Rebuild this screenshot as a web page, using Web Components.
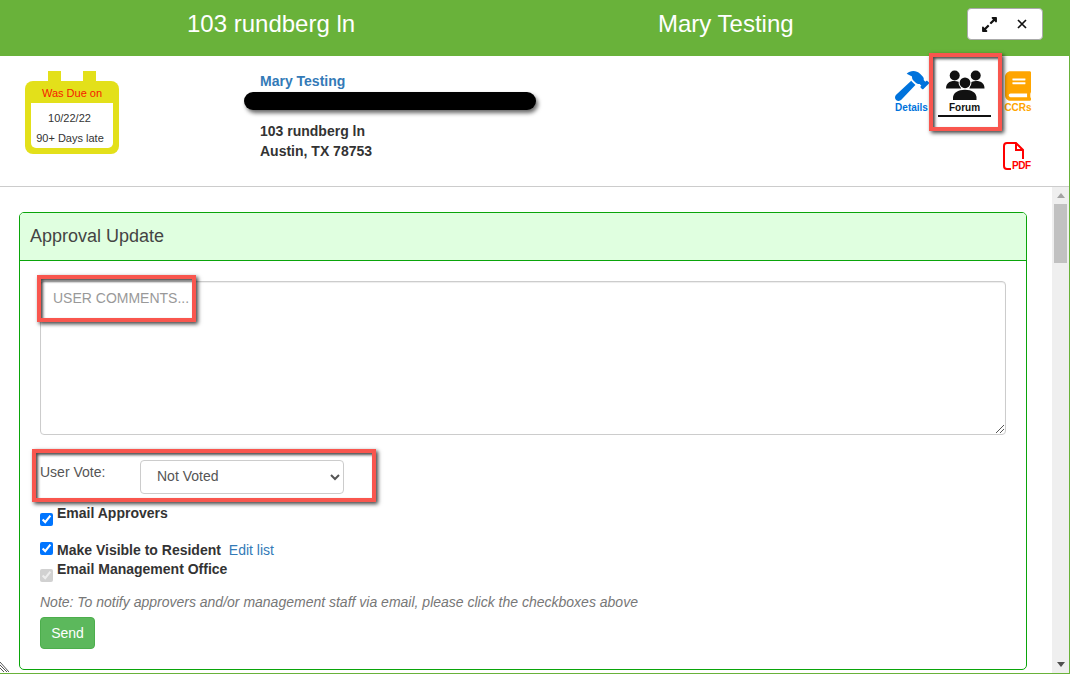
<!DOCTYPE html>
<html lang="en">
<head>
<meta charset="utf-8">
<title>Approval Update</title>
<style>
  html, body { margin: 0; padding: 0; background: #fff; overflow: hidden; }
  body { font-family: "Liberation Sans", Arial, sans-serif; font-size: 14px; color: #333; }
</style>
</head>
<body>
<request-window>
  <title-bar slot="top" address="103 rundberg ln" owner="Mary Testing"></title-bar>
  <request-summary slot="top"></request-summary>
  <approval-card></approval-card>
</request-window>

<script>
const ICONS = {
  hammer: '<svg viewBox="0 0 576 512" width="34" height="30" preserveAspectRatio="none" fill="#0073dc"><path d="M571.31 193.94l-22.63-22.63c-6.25-6.25-16.38-6.25-22.63 0l-11.31 11.31-28.9-28.9c5.63-21.31.36-44.9-16.35-61.61l-45.25-45.25c-62.48-62.48-163.79-62.48-226.28 0l90.51 45.25v18.75c0 16.97 6.74 33.25 18.75 45.25l49.14 49.14c16.71 16.71 40.3 21.98 61.61 16.35l28.9 28.9-11.31 11.31c-6.25 6.25-6.25 16.38 0 22.63l22.63 22.63c6.25 6.25 16.38 6.25 22.63 0l90.51-90.51c6.23-6.24 6.23-16.37-.02-22.62zm-286.72-15.2c-3.7-3.7-6.84-7.79-9.85-11.95L19.64 404.96c-25.57 23.88-26.26 64.19-1.53 88.93s65.05 24.05 88.93-1.53l238.13-255.07c-3.96-2.91-7.9-5.87-11.44-9.41l-49.14-49.14z"/></svg>',
  users: `<svg viewBox="0 0 40 31" width="40" height="31" fill="#111">
    <circle cx="9.7" cy="5.5" r="5"/><circle cx="30.7" cy="5.5" r="5"/>
    <path d="M1 18.5C1 13.5 4 11 9.5 11c3 0 5.5 1 6.5 3v4.5z"/>
    <path d="M39.5 18.5c0-5-3-7.5-8.5-7.5-3 0-5.5 1-6.5 3v4.5z"/>
    <circle cx="20" cy="12.8" r="6.4" fill="#fff"/><circle cx="20" cy="12.8" r="5.4"/>
    <path d="M8 30v-2.5C8 23 13 19.7 20 19.7s11.500 3.300 11.500 7.800V30z"/>
  </svg>`,
  book: '<svg viewBox="0 0 448 512" width="26" height="30" fill="#ffa500"><path d="M448 360V24c0-13.3-10.7-24-24-24H96C43 0 0 43 0 96v320c0 53 43 96 96 96h328c13.3 0 24-10.7 24-24v-16c0-7.5-3.5-14.3-8.9-18.7-4.2-15.4-4.2-59.3 0-74.7 5.4-4.3 8.9-11.1 8.9-18.6zM128 134c0-3.3 2.7-6 6-6h212c3.3 0 6 2.7 6 6v20c0 3.3-2.7 6-6 6H134c-3.3 0-6-2.7-6-6v-20zm0 64c0-3.3 2.7-6 6-6h212c3.3 0 6 2.7 6 6v20c0 3.3-2.7 6-6 6H134c-3.3 0-6-2.7-6-6v-20zm253.4 250H96c-17.7 0-32-14.3-32-32 0-17.6 14.4-32 32-32h285.4c-1.9 17.1-1.9 46.9 0 64z"/></svg>',
  expand: '<svg viewBox="0 0 448 512" width="15" height="17" fill="#111"><path d="M212.686 315.314L120 408l32.922 31.029c15.12 15.12 4.412 40.971-16.97 40.971h-112C10.697 480 0 469.255 0 456V344c0-21.382 25.803-32.09 40.922-16.971L72 360l92.686-92.686c6.248-6.248 16.379-6.248 22.627 0l25.373 25.373c6.249 6.248 6.249 16.378 0 22.627zm22.628-118.628L328 104l-32.922-31.029C279.958 57.851 290.666 32 312.048 32h112C437.303 32 448 42.745 448 56v112c0 21.382-25.803 32.09-40.922 16.971L376 152l-92.686 92.686c-6.248 6.248-16.379 6.248-22.627 0l-25.373-25.373c-6.249-6.248-6.249-16.378 0-22.627z"/></svg>',
  close: '<svg viewBox="0 0 10 10" width="10" height="10" stroke="#111" stroke-width="1.7" fill="none"><path d="M1 1l8 8M9 1l-8 8"/></svg>'
};

class RequestWindow extends HTMLElement {
  constructor() {
    super();
    this.attachShadow({ mode: 'open' });
    this.shadowRoot.innerHTML = `
      <style>
        :host {
          display: flex;
          flex-direction: column;
          position: relative;
          width: 1069px;
          height: 673px;
          box-sizing: content-box;
          border-right: 1px solid #69b23a;
          border-bottom: 1px solid #69b23a;
          overflow: hidden;
          background: #fff;
        }
        .main { flex: 1; min-height: 0; display: flex; }
        .scroller { flex: 1; min-width: 0; overflow: hidden; padding: 25px 25px 0 19px; }
        .grip { position: absolute; left: 0; bottom: 0; }
      </style>
      <slot name="top"></slot>
      <div class="main">
        <div class="scroller"><slot></slot></div>
        <fake-scrollbar></fake-scrollbar>
      </div>
      <svg class="grip" width="9" height="11" viewBox="0 0 9 11" stroke="#555" stroke-width="1" fill="none">
        <path d="M0 3l7 7M0 6l4 4M0 0l9 10"/>
      </svg>
      <note-box style="left:929px;top:53px;width:73px;height:78px"></note-box>
      <note-box style="left:37px;top:275px;width:159px;height:47px"></note-box>
      <note-box style="left:32px;top:449px;width:344px;height:53px"></note-box>
    `;
  }
}

class NoteBox extends HTMLElement {
  constructor() {
    super();
    this.attachShadow({ mode: 'open' });
    this.shadowRoot.innerHTML = `
      <style>
        :host {
          position: absolute;
          box-sizing: border-box;
          border: 4px solid #f9564e;
          box-shadow: 2px 2px 4px rgba(0,0,0,.75), inset 2px 2px 3px rgba(0,0,0,.7);
          pointer-events: none;
        }
      </style>
    `;
  }
}

class TitleBar extends HTMLElement {
  constructor() {
    super();
    this.attachShadow({ mode: 'open' });
    this.shadowRoot.innerHTML = `
      <style>
        :host {
          display: flex;
          align-items: center;
          height: 56px;
          box-sizing: border-box;
          padding-bottom: 8px;
          flex: none;
          background: #69b23a;
          color: #fff;
          font-size: 24px;
        }
        .address { margin-left: 187px; width: 471px; }
        .owner { width: 309px; }
        .controls {
          width: 76px;
          height: 32px;
          box-sizing: border-box;
          background: #fff;
          border: 1px solid #aaa;
          border-radius: 4px;
          display: flex;
          align-items: center;
          gap: 20px;
          padding-left: 14px;
        }
        .controls svg { display: block; }
      </style>
      <div class="address"></div>
      <div class="owner"></div>
      <div class="controls">${ICONS.expand}${ICONS.close}</div>
    `;
    this.shadowRoot.querySelector('.address').textContent = this.getAttribute('address');
    this.shadowRoot.querySelector('.owner').textContent = this.getAttribute('owner');
  }
}

class DueCalendar extends HTMLElement {
  constructor() {
    super();
    this.attachShadow({ mode: 'open' });
    this.shadowRoot.innerHTML = `
      <style>
        :host { display: block; width: 94px; flex: none; font-size: 11px; color: #333; }
        .tabs { display: flex; gap: 22px; padding-left: 23px; height: 10px; }
        .tabs i { width: 13px; background: #e3e01a; }
        .body { background: #e3e01a; border-radius: 8px; padding: 0 6px 6px; height: 73px; box-sizing: border-box; display: flex; flex-direction: column; }
        .head { height: 22px; line-height: 24px; text-align: center; color: #f51a00; }
        .inner { flex: 1; background: #fff; border-radius: 0 0 5px 5px; text-align: center; }
        .date { line-height: 14px; padding-top: 8px; padding-right: 5px; }
        .late { line-height: 14px; padding-top: 6px; padding-right: 4px; }
      </style>
      <div class="tabs"><i></i><i></i></div>
      <div class="body">
        <div class="head">Was Due on</div>
        <div class="inner">
          <div class="date">10/22/22</div>
          <div class="late">90+ Days late</div>
        </div>
      </div>
    `;
  }
}

class ResidentInfo extends HTMLElement {
  constructor() {
    super();
    this.attachShadow({ mode: 'open' });
    this.shadowRoot.innerHTML = `
      <style>
        :host { display: block; width: 300px; font-weight: bold; font-size: 14px; color: #333; }
        .name { color: #337ab7; line-height: 16px; padding-left: 16px; }
        .redact { width: 292px; height: 18px; border-radius: 9px; background: #000; margin-top: 3px; box-shadow: 2px 3px 4px rgba(0,0,0,.6); }
        .addr { padding: 11px 0 0 16px; line-height: 20px; }
      </style>
      <div class="name">Mary Testing</div>
      <div class="redact"></div>
      <div class="addr">103 rundberg ln<br>Austin, TX 78753</div>
    `;
  }
}

class NavIcon extends HTMLElement {
  constructor() {
    super();
    this.attachShadow({ mode: 'open' });
    const color = this.getAttribute('color');
    this.shadowRoot.innerHTML = `
      <style>
        :host { display: flex; flex-direction: column; align-items: center; font-size: 10px; font-weight: bold; color: ${color}; }
        .art { height: 31px; display: flex; align-items: flex-end; justify-content: center; }
        .art svg { display: block; }
        .label { line-height: 12px; margin-top: 1px; padding-bottom: 1px; width: 100%; text-align: center; }
        :host([active]) .label { border-bottom: 2px solid #111; }
      </style>
      <div class="art">${ICONS[this.getAttribute('icon')]}</div>
      <div class="label">${this.getAttribute('label')}</div>
    `;
  }
}

class PdfIcon extends HTMLElement {
  constructor() {
    super();
    this.attachShadow({ mode: 'open' });
    this.shadowRoot.innerHTML = `
      <style>
        :host { display: block; width: 28px; height: 28px; }
        svg { display: block; overflow: visible; }
        text { font: bold 10px "Liberation Sans", Arial, sans-serif; fill: #f00; }
      </style>
      <svg width="28" height="28" viewBox="0 0 28 28" fill="none" stroke="#f00" stroke-width="2">
        <path d="M8 27H4a3 3 0 0 1-3-3V4a3 3 0 0 1 3-3h9l7 7v9"/>
        <path d="M13 1v7h7"/>
        <text x="9" y="27" stroke="none" textLength="19">PDF</text>
      </svg>
    `;
  }
}

class RequestSummary extends HTMLElement {
  constructor() {
    super();
    this.attachShadow({ mode: 'open' });
    this.shadowRoot.innerHTML = `
      <style>
        :host {
          display: flex;
          flex: none;
          height: 130px;
          box-sizing: content-box;
          border-bottom: 1px solid #ccc;
          padding-left: 25px;
        }
        due-calendar { margin-top: 15px; }
        resident-info { margin: 17px 0 0 125px; }
        .nav {
          margin: 14px 36px 0 auto;
          display: grid;
          grid-template-columns: 35px 53px 33px;
          column-gap: 9px;
          align-content: start;
        }
        .nav nav-icon:nth-child(3) { width: 30px; justify-self: end; }
        pdf-icon { grid-column: 3; margin-top: 25px; justify-self: end; margin-right: 2px; }
      </style>
      <due-calendar></due-calendar>
      <resident-info></resident-info>
      <div class="nav">
        <nav-icon icon="hammer" label="Details" color="#0073dc"></nav-icon>
        <nav-icon icon="users" label="Forum" color="#111" active></nav-icon>
        <nav-icon icon="book" label="CCRs" color="#ffa500"></nav-icon>
        <pdf-icon></pdf-icon>
      </div>
    `;
  }
}

class CheckRow extends HTMLElement {
  constructor() {
    super();
    this.attachShadow({ mode: 'open' });
    const disabled = this.hasAttribute('disabled') ? 'disabled' : '';
    this.shadowRoot.innerHTML = `
      <style>
        :host { display: flex; align-items: center; height: 20px; font-size: 14px; font-weight: bold; color: #333; white-space: pre; }
        input { width: 13px; height: 13px; margin: 0 4px 0 0; position: relative; top: -2px; }
      </style>
      <input type="checkbox" checked ${disabled}>
      <slot></slot>
    `;
  }
}

class ApprovalCard extends HTMLElement {
  constructor() {
    super();
    this.attachShadow({ mode: 'open' });
    this.shadowRoot.innerHTML = `
      <style>
        :host {
          display: block;
          width: 1008px;
          height: 458px;
          box-sizing: border-box;
          border: 1px solid #0aa50a;
          border-radius: 5px;
          overflow: hidden;
          font-size: 14px;
          color: #555;
        }
        .head {
          height: 48px;
          box-sizing: border-box;
          background: #e0ffe0;
          border-bottom: 1px solid #0aa50a;
          font-size: 18px;
          line-height: 46px;
          padding-left: 10px;
          color: #444;
        }
        .body { padding: 20px 20px 0; }
        .comments {
          position: relative;
          height: 154px;
          width: 966px;
          box-sizing: border-box;
          border: 1px solid #ccc;
          border-radius: 4px;
          padding: 7px 12px;
          color: #999;
          line-height: 18px;
          box-shadow: inset 0 1px 1px rgba(0,0,0,.075);
        }
        .comments svg { position: absolute; right: 1px; bottom: 1px; }
        .vote { display: flex; align-items: flex-start; margin-top: 25px; height: 34px; }
        .vote label { width: 100px; padding-top: 3px; line-height: 18px; }
        select {
          width: 204px;
          height: 34px;
          box-sizing: border-box;
          background: #fff;
          border: 1px solid #ccc;
          border-radius: 4px;
          padding: 0 12px 2px;
          font: 14px "Liberation Sans", Arial, sans-serif;
          color: #555;
        }
        .checks { margin-top: 17px; }
        check-row + check-row { margin-top: 9px; }
        check-row.tight { margin-top: 7px; }
        a { font-weight: normal; color: #337ab7; margin-left: 4px; text-decoration: none; }
        .note { font-size: 14px; font-style: italic; color: #777; line-height: 16px; margin-top: 7px; }
        button {
          display: block;
          margin-top: 7px;
          width: 55px;
          height: 32px;
          background: #5cb85c;
          border: 1px solid #4cae4c;
          border-radius: 4px;
          color: #fff;
          font: 14px "Liberation Sans", Arial, sans-serif;
          padding: 0;
        }
      </style>
      <div class="head">Approval Update</div>
      <div class="body">
        <div class="comments">USER COMMENTS...
          <svg width="9" height="9" viewBox="0 0 9 9" stroke="#555" fill="none"><path d="M1 9l8-8M5 9l4-4"/></svg>
        </div>
        <div class="vote">
          <label>User Vote:</label>
          <select><option>Not Voted</option></select>
        </div>
        <div class="checks">
          <check-row>Email Approvers</check-row>
          <check-row>Make Visible to Resident <a href="#">Edit list</a></check-row>
          <check-row class="tight" disabled>Email Management Office</check-row>
        </div>
        <div class="note">Note: To notify approvers and/or management staff via email, please click the checkboxes above</div>
        <button>Send</button>
      </div>
    `;
  }
}

class FakeScrollbar extends HTMLElement {
  constructor() {
    super();
    this.attachShadow({ mode: 'open' });
    this.shadowRoot.innerHTML = `
      <style>
        :host { display: flex; flex-direction: column; width: 17px; flex: none; background: #efefef; position: relative; }
        .arrow { height: 17px; display: flex; align-items: center; justify-content: center; }
        .thumb { margin: 0 2px; height: 59px; background: #c1c1c1; }
        .fill { flex: 1; }
      </style>
      <div class="arrow"><svg width="8" height="5" viewBox="0 0 8 5" fill="#a3a3a3"><path d="M4 0l4 5H0z"/></svg></div>
      <div class="thumb"></div>
      <div class="fill"></div>
      <div class="arrow"><svg width="8" height="5" viewBox="0 0 8 5" fill="#505050"><path d="M0 0h8L4 5z"/></svg></div>
    `;
  }
}

customElements.define('note-box', NoteBox);
customElements.define('fake-scrollbar', FakeScrollbar);
customElements.define('title-bar', TitleBar);
customElements.define('due-calendar', DueCalendar);
customElements.define('resident-info', ResidentInfo);
customElements.define('nav-icon', NavIcon);
customElements.define('pdf-icon', PdfIcon);
customElements.define('request-summary', RequestSummary);
customElements.define('check-row', CheckRow);
customElements.define('approval-card', ApprovalCard);
customElements.define('request-window', RequestWindow);
</script>
</body>
</html>
